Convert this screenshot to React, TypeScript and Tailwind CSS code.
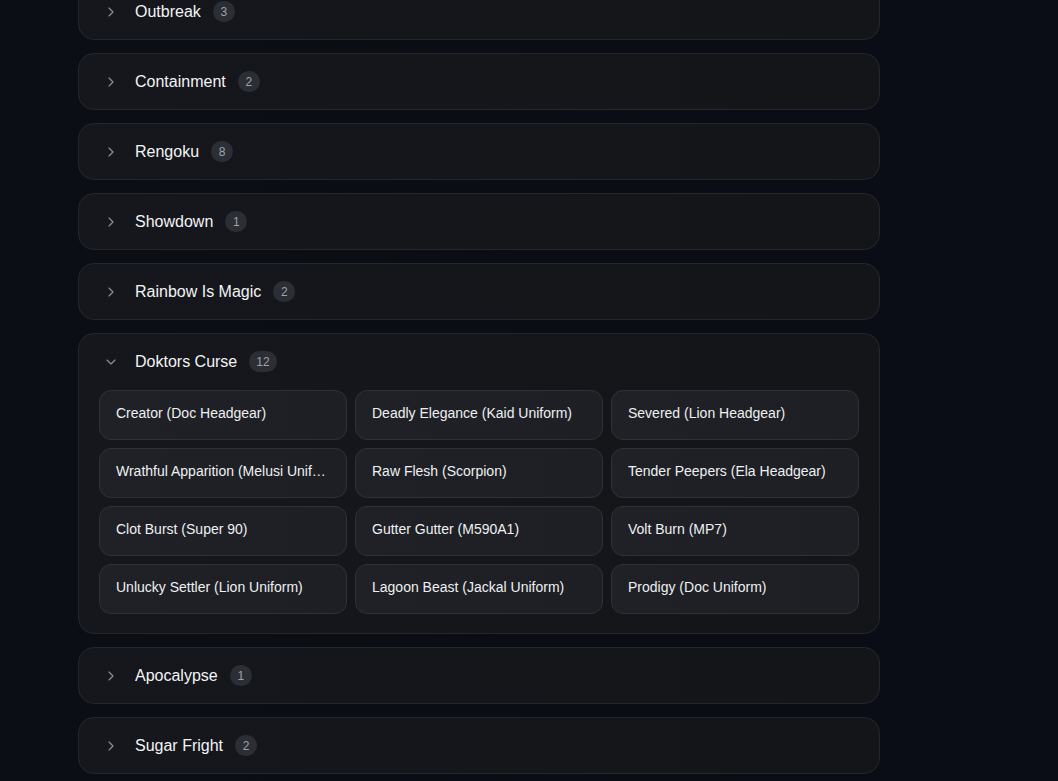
import { ChevronDown, ChevronRight } from "lucide-react";

type Group = { name: string; count: number; open?: boolean; items?: string[] };

const GROUPS: Group[] = [
  { name: "Outbreak", count: 3 },
  { name: "Containment", count: 2 },
  { name: "Rengoku", count: 8 },
  { name: "Showdown", count: 1 },
  { name: "Rainbow Is Magic", count: 2 },
  {
    name: "Doktors Curse",
    count: 12,
    open: true,
    items: [
      "Creator (Doc Headgear)",
      "Deadly Elegance (Kaid Uniform)",
      "Severed (Lion Headgear)",
      "Wrathful Apparition (Melusi Uniform)",
      "Raw Flesh (Scorpion)",
      "Tender Peepers (Ela Headgear)",
      "Clot Burst (Super 90)",
      "Gutter Gutter (M590A1)",
      "Volt Burn (MP7)",
      "Unlucky Settler (Lion Uniform)",
      "Lagoon Beast (Jackal Uniform)",
      "Prodigy (Doc Uniform)",
    ],
  },
  { name: "Apocalypse", count: 1 },
  { name: "Sugar Fright", count: 2 },
];

function GroupCard({ group }: { group: Group }) {
  const Icon = group.open ? ChevronDown : ChevronRight;
  return (
    <div className="rounded-2xl border border-[#24272d] bg-gradient-to-r from-[#15171c] to-[#131519]">
      {/* Header */}
      <div className="flex h-[55px] items-center pl-[24px]">
        <Icon className="h-4 w-4 text-[#8a8f98]" strokeWidth={1.75} />
        <span className="ml-[16px] text-[16px] text-[#f3f4f6]">{group.name}</span>
        <span className="ml-[12px] flex h-[21px] min-w-[22px] items-center justify-center rounded-full bg-[#2b2e34] px-[7px] text-[12px] text-[#9ea2aa]">
          {group.count}
        </span>
      </div>

      {/* Items */}
      {group.open && group.items && (
        <div className="grid grid-cols-3 gap-2 px-5 pt-px pb-[19px]">
          {group.items.map((item) => (
            <div
              key={item}
              className="flex h-[50px] min-w-0 items-center rounded-xl border border-[#2e3137] bg-gradient-to-r from-[#1f2126] to-[#1d1f24] px-4 pb-[3px]"
            >
              <span className="truncate text-[14px] text-[#eef0f2]">{item}</span>
            </div>
          ))}
        </div>
      )}
    </div>
  );
}

export default function App() {
  return (
    <div
      className="h-[781px] overflow-hidden bg-gradient-to-r from-[#0b0e15] via-[#0a0d14] to-[#0b0d16]"
      style={{ fontFamily: '"Liberation Sans", Arial, sans-serif' }}
    >
      <div className="ml-[78px] -mt-[17px] flex w-[802px] flex-col gap-[13px]">
        {GROUPS.map((g) => (
          <GroupCard key={g.name} group={g} />
        ))}
      </div>
    </div>
  );
}
